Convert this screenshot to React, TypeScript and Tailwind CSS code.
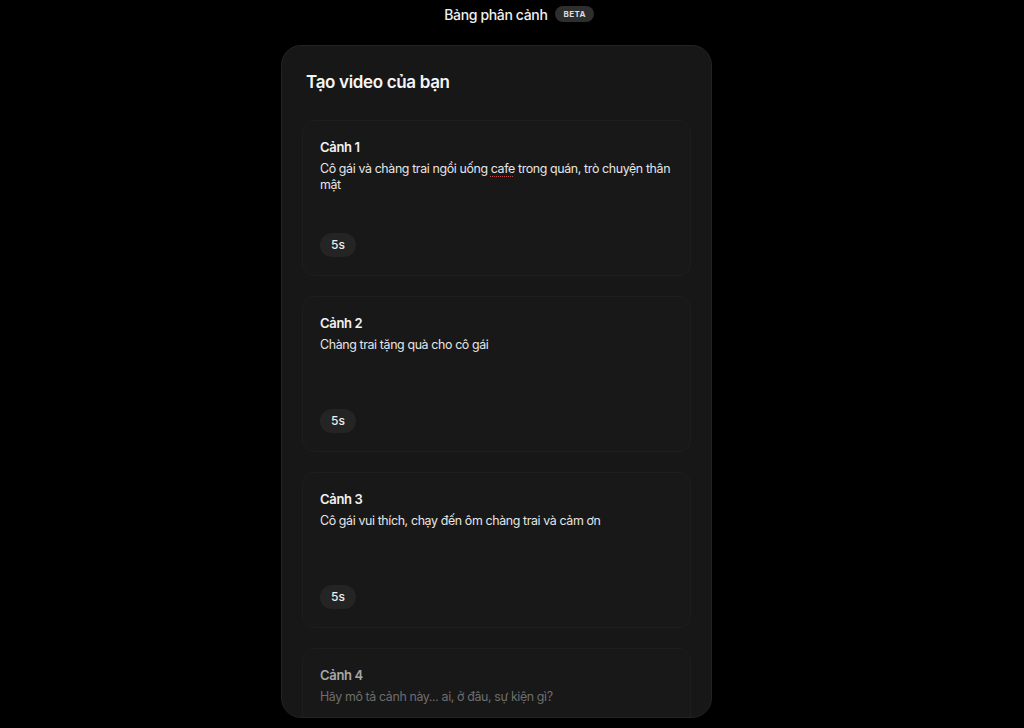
import { ReactNode } from 'react'

interface Scene {
  id: number
  text: string
  duration?: string
}

const scenes: Scene[] = [
  { id: 1, text: 'Cô gái và chàng trai ngồi uống cafe trong quán, trò chuyện thân mật', duration: '5s' },
  { id: 2, text: 'Chàng trai tặng quà cho cô gái', duration: '5s' },
  { id: 3, text: 'Cô gái vui thích, chạy đến ôm chàng trai và cảm ơn', duration: '5s' },
]

function renderText(text: string): ReactNode {
  // mimic the browser spell-check squiggle on "cafe"
  const idx = text.indexOf('cafe')
  if (idx < 0) return text
  return (
    <>
      {text.slice(0, idx)}
      <span className="underline decoration-dotted decoration-[#c04848] decoration-1 underline-offset-[3px]">cafe</span>
      {text.slice(idx + 4)}
    </>
  )
}

function SceneCard({ scene }: { scene: Scene }) {
  return (
    <div className="rounded-xl border border-[#1e1e1e] bg-[#181818] pl-[17px] pr-3 pt-4 pb-5 h-[156px] shrink-0">
      <div className="text-[13px] leading-5 font-semibold tracking-tight text-[#f2f2f2]">Cảnh {scene.id}</div>
      <p className="mt-1 h-[60px] text-[12.4px] leading-4 tracking-[-0.03em] text-[#e6e6e6]">{renderText(scene.text)}</p>
      <div className="mt-3 inline-flex h-6 w-9 items-center justify-center rounded-full bg-[#242424] text-[12px] font-medium text-[#ededed]">
        {scene.duration}
      </div>
    </div>
  )
}

export default function App() {
  return (
    <div
      className="min-h-screen h-[728px] bg-black flex flex-col items-center overflow-hidden"
      style={{ fontFamily: 'Inter, "Noto Sans", sans-serif' }}
    >
      <header className="ml-[14px] flex items-center gap-2 h-7">
        <span className="text-[14px] font-medium tracking-tight text-[#f0f0f0]">Bảng phân cảnh</span>
        <span className="rounded-full bg-[#2e2e2e] px-2 h-4 flex items-center text-[8px] font-bold tracking-wider text-[#dcdcdc]">
          BETA
        </span>
      </header>

      <main className="mt-[17px] mr-[31px] w-[431px] h-[673px] rounded-[20px] border border-[#232323] bg-[#171717] overflow-hidden flex flex-col">
        <h1 className="px-6 pt-[22px] text-[17px] leading-7 font-semibold tracking-[-0.02em] text-[#f5f5f5]">Tạo video của bạn</h1>
        <div className="mt-6 px-5 flex flex-col gap-5">
          {scenes.map((s) => (
            <SceneCard key={s.id} scene={s} />
          ))}
          <div className="rounded-xl border border-[#1e1e1e] bg-[#181818] pl-[17px] pr-3 pt-4 pb-5 h-[156px] shrink-0">
            <div className="text-[13px] leading-5 font-semibold tracking-tight text-[#a8a8a8]">Cảnh 4</div>
            <p className="mt-0.5 text-[12.4px] leading-5 tracking-[-0.03em] text-[#6e6e6e]">Hãy mô tả cảnh này... ai, ở đâu, sự kiện gì?</p>
          </div>
        </div>
      </main>
    </div>
  )
}
